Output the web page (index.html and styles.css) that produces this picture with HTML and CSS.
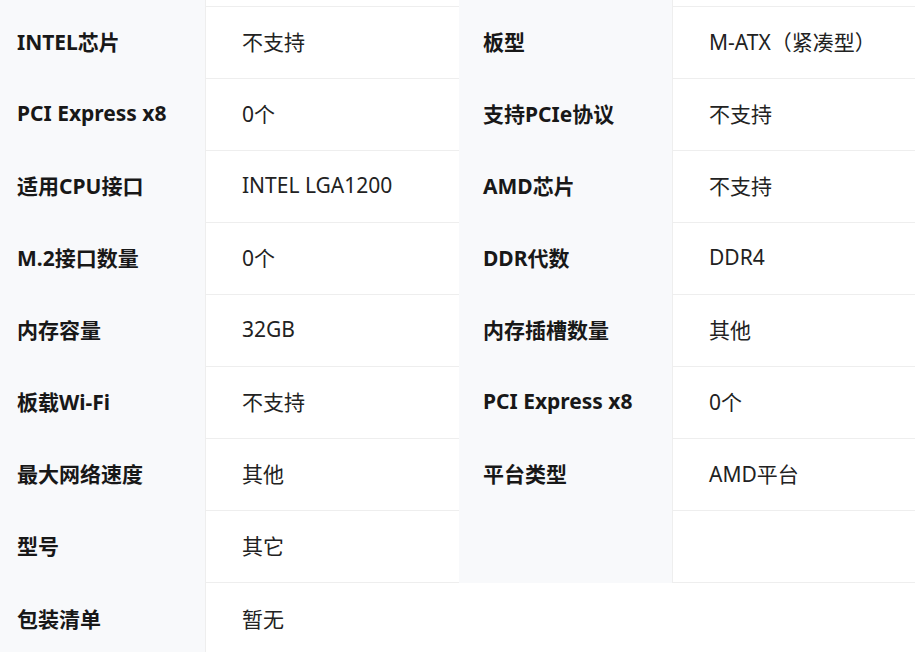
FILE: index.html
```html
<!DOCTYPE html>
<html lang="zh-CN">
<head>
<meta charset="utf-8">
<title>参数</title>
<link rel="stylesheet" href="styles.css">
</head>
<body>
<div class="specs">
  <div class="cell label stub"></div><div class="cell value stub"></div><div class="cell label stub"></div><div class="cell value stub"></div>

  <div class="cell label">INTEL芯片</div><div class="cell value">不支持</div><div class="cell label">板型</div><div class="cell value">M-ATX（紧凑型）</div>
  <div class="cell label">PCI Express x8</div><div class="cell value">0个</div><div class="cell label">支持PCIe协议</div><div class="cell value">不支持</div>
  <div class="cell label">适用CPU接口</div><div class="cell value">INTEL LGA1200</div><div class="cell label">AMD芯片</div><div class="cell value">不支持</div>
  <div class="cell label">M.2接口数量</div><div class="cell value">0个</div><div class="cell label">DDR代数</div><div class="cell value">DDR4</div>
  <div class="cell label">内存容量</div><div class="cell value">32GB</div><div class="cell label">内存插槽数量</div><div class="cell value">其他</div>
  <div class="cell label">板载Wi-Fi</div><div class="cell value">不支持</div><div class="cell label">PCI Express x8</div><div class="cell value">0个</div>
  <div class="cell label">最大网络速度</div><div class="cell value">其他</div><div class="cell label">平台类型</div><div class="cell value">AMD平台</div>
  <div class="cell label">型号</div><div class="cell value">其它</div><div class="cell label"></div><div class="cell value"></div>
  <div class="cell label last">包装清单</div><div class="cell value wide last">暂无</div>
</div>
</body>
</html>
```
FILE: styles.css
```css
html, body {
  margin: 0;
  padding: 0;
  background: #ffffff;
  overflow: hidden;
}

body {
  font-family: "Noto Sans", "Noto Sans CJK SC", sans-serif;
  font-size: 21px;
  color: #222222;
}

.specs {
  display: grid;
  grid-template-columns: 212px 254px 213px 254px;
  grid-template-rows: 7px;
  grid-auto-rows: 72px;
  width: 933px;
  margin-left: -7px;
}

.cell {
  display: flex;
  align-items: center;
  box-sizing: border-box;
  padding-bottom: 3px;
  border-bottom: 1px solid #eeeeee;
  white-space: nowrap;
}

.label {
  background: #f8f9fb;
  padding-left: 24px;
  font-weight: 700;
  color: #181818;
  border-bottom-color: #f8f9fb;
}

.value {
  background: #ffffff;
  padding-left: 36px;
  border-left: 1px solid #eeeeee;
  color: #222222;
}

.stub {
  height: 7px;
  padding-bottom: 0;
}

.wide {
  grid-column: span 3;
}

.label.last,
.value.last {
  border-bottom: none;
}
```
